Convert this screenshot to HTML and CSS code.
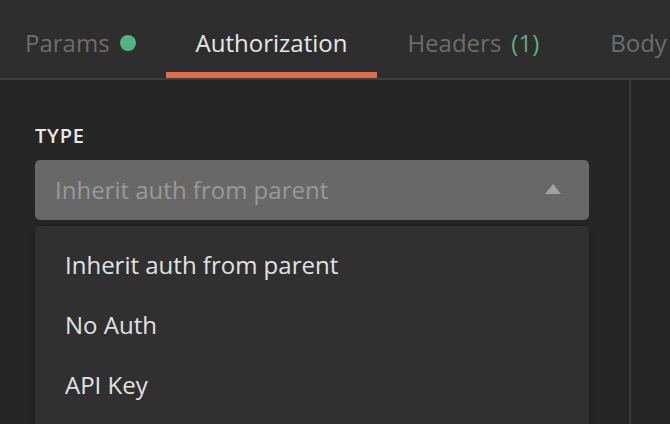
FILE: index.html
```html
<!DOCTYPE html>
<html>
<head>
<meta charset="utf-8">
<link rel="stylesheet" href="styles.css">
</head>
<body>
<div class="app">
  <nav class="tabs">
    <div class="tab tab-params">Params <span class="dot"></span></div>
    <div class="tab tab-active">Authorization</div>
    <div class="tab tab-headers">Headers <span class="count">(1)</span></div>
    <div class="tab">Body</div>
  </nav>
  <main class="main">
    <section class="left">
      <div class="label">TYPE</div>
      <div class="select-wrap">
        <div class="select">
          <span class="select-text">Inherit auth from parent</span>
          <svg class="caret" width="16" height="10" viewBox="0 0 16 10"><path d="M8 0 L16 10 L0 10 Z" fill="#a2a2a2"/></svg>
        </div>
        <ul class="menu">
          <li class="item">Inherit auth from parent</li>
          <li class="item">No Auth</li>
          <li class="item">API Key</li>
        </ul>
      </div>
    </section>
    <section class="right"></section>
  </main>
</div>
</body>
</html>
```
FILE: styles.css
```css
* { box-sizing: border-box; }
html, body { margin: 0; padding: 0; }
body {
  width: 670px;
  height: 424px;
  overflow: hidden;
  background: #262626;
  font-family: "Open Sans", "Noto Sans", sans-serif;
}
.app { display: flex; flex-direction: column; height: 424px; overflow: hidden; }
.tabs {
  display: flex;
  height: 80px;
  background: #2e2e2e;
  border-bottom: 2px solid #3e3e3e;
  white-space: nowrap;
  flex-shrink: 0;
  overflow: hidden;
}
.tab {
  height: 78px;
  padding: 27px 30px 0;
  font-size: 24px;
  line-height: 32px;
  color: #6d6d6d;
  border-bottom: 6px solid transparent;
  display: flex;
  align-items: flex-start;
  flex-shrink: 0;
}
.tab-params { margin-left: -5px; }
.dot {
  display: inline-block;
  width: 16px;
  height: 16px;
  border-radius: 50%;
  background: #4fb585;
  margin-left: 10px;
  margin-top: 8px;
}
.tab-active {
  color: #e6e6e6;
  border-bottom-color: #e06e48;
}
.tab-headers { padding-right: 41px; }
.count { color: #4fb585; margin-left: 10px; }
.main { display: flex; flex: 1; min-height: 0; }
.left {
  width: 631px;
  border-right: 2px solid #3c3c3c;
  padding: 44px 40px 0 35px;
}
.right { flex: 1; }
.label {
  font-size: 20px;
  line-height: 24px;
  font-weight: 600;
  color: #e8e8e8;
  letter-spacing: 0.8px;
  margin-bottom: 12px;
}
.select-wrap { position: relative; }
.select {
  height: 60px;
  background: #686868;
  border-radius: 5px;
  display: flex;
  align-items: center;
  justify-content: space-between;
  padding: 0 28px 0 20px;
}
.select-text {
  font-size: 24px;
  line-height: 60px;
  color: #999999;
}
.caret { display: block; margin-top: -2px; }
.menu {
  position: absolute;
  left: 0;
  right: 0;
  top: 66px;
  margin: 0;
  list-style: none;
  padding: 9px 0 0 30px;
  height: 198px;
  background: #303030;
  border-radius: 5px 5px 0 0;
  box-shadow: 0 0 4px rgba(0, 0, 0, 0.35);
}
.item {
  font-size: 24px;
  line-height: 60px;
  height: 60px;
  color: #e2e2e2;
}
```
